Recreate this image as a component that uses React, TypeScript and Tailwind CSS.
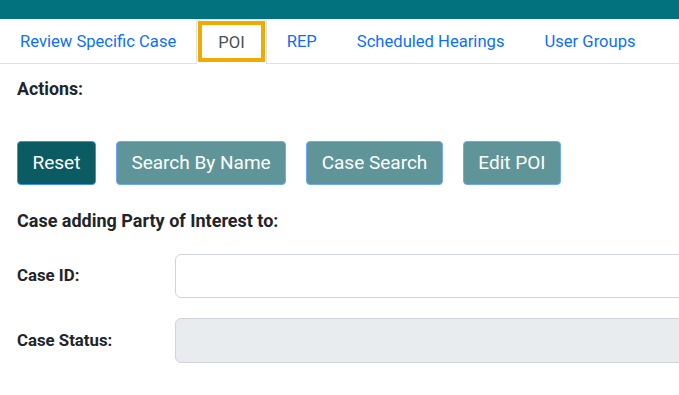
import React from 'react';

const tabs = ['Review Specific Case', 'POI', 'REP', 'Scheduled Hearings', 'User Groups'];
const actions = ['Reset', 'Search By Name', 'Case Search', 'Edit POI'];

export default function App() {
  return (
    <div className="w-[679px] h-[395px] overflow-hidden bg-white text-[#212529] font-['Roboto',sans-serif]">
      {/* top bar */}
      <div className="h-[19px] bg-[#02727e]" />

      {/* tabs */}
      <div className="flex h-[45px] border-b border-[#dee2e6]">
        {tabs.map((t) =>
          t === 'POI' ? (
            <div
              key={t}
              className="relative -mb-px flex items-center pt-[2px] px-[21px] bg-white border-x border-t border-[#dee2e6] rounded-t text-[16.6px] text-[#495057]"
            >
              <span className="absolute left-[1px] right-[1px] top-[1px] bottom-[2px] border-[4px] border-[#f0aa00]" />
              {t}
            </div>
          ) : (
            <div key={t} className="flex items-center pt-[2px] px-[20px] text-[16.6px] text-[#0d6efd]">
              {t}
            </div>
          )
        )}
      </div>

      <div className="pl-[17px]">
        <div className="pt-[13px] text-[17.8px] font-bold leading-[24px]">Actions:</div>

        <div className="flex gap-5 mt-[40px]">
          {actions.map((a, i) => (
            <button
              key={a}
              className={`h-[44px] px-[14.5px] rounded text-[19px] text-white border ${
                i === 0 ? 'bg-[#0b5b62] border-[#3d8bfd]' : 'bg-[#5f9599] border-[#6ea8fe]'
              }`}
            >
              {a}
            </button>
          ))}
        </div>

        <div className="mt-[24px] text-[18px] font-bold leading-[24px]">Case adding Party of Interest to:</div>

        <div className="flex items-center mt-[21px]">
          <div className="w-[158px] text-[16.8px] font-bold">Case ID:</div>
          <div className="flex-1 h-[44px] rounded-md border border-[#ced4da] bg-white -mr-[10px]" />
        </div>

        <div className="flex items-center mt-[20px]">
          <div className="w-[158px] text-[16.8px] font-bold">Case Status:</div>
          <div className="flex-1 h-[45px] rounded-md border border-[#ced4da] bg-[#e9ecef] -mr-[10px]" />
        </div>
      </div>
    </div>
  );
}
